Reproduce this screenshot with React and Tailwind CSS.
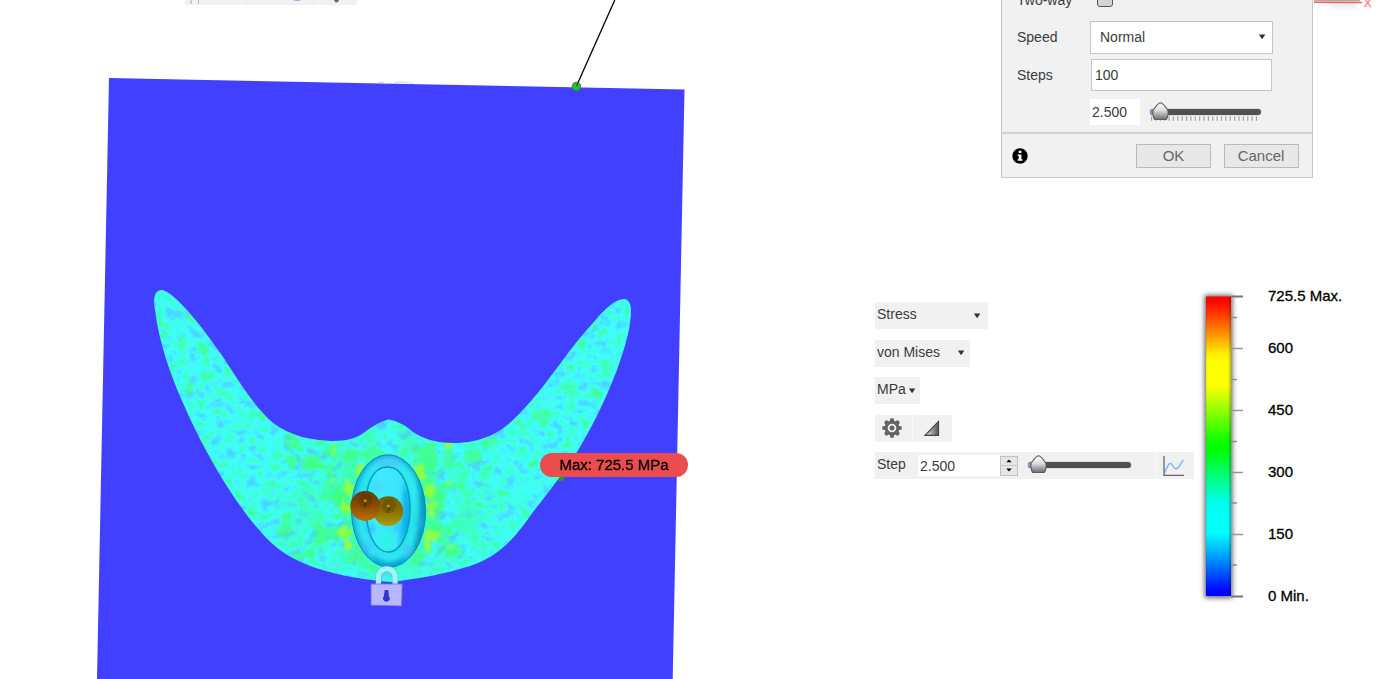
import React from "react";

const BODY =
  "M161 290C154 291 153 300 155 310C159 342 170 374 183 403C195 431 208 455 223 480C236 501 249 519 260 531" +
  "C276 550 293 560 316 568C340 576 366 580 391 582C417 579 445 574 470 566C501 556 517 535 533 512" +
  "C549 492 564 472 577 452C596 421 608 393 617 370C625 347 631 329 631 310C631 303 628 299 624 299" +
  "C613 300 603 311 593 323C582 335 572 347 563 360C545 384 531 403 513 420C498 434 480 443 452 443" +
  "C436 443 424 439 413 432C405 425 397 421 389 419.500C381 421 373 426 365 432C357 438 348 441 332 441" +
  "C312 440 292 437 273 423C256 408 241 385 227 363C214 343 200 325 187 310C176 298 167 290 161 290Z";

const YELLOW = [
  [360, 470, 5, 6], [349, 487, 6, 7], [344, 505, 6, 7], [343, 532, 7, 6], [347, 544, 4, 6], [419, 471, 6, 9],
  [429, 490, 6, 8], [430, 507, 5, 8], [431, 534, 8, 5], [427, 543, 4, 7], [332, 447, 2, 6], [448, 445, 3, 3],
  [331, 479, 3, 1.5], [447, 481, 3, 2], [324, 542, 2, 3], [450, 545, 2, 3],
];

const GREEN = [
  [291, 440, 8, 8], [291, 461, 6, 7], [332, 450, 6, 8], [349, 454, 10, 7], [330, 474, 5, 12], [372, 456, 10, 8],
  [428, 455, 10, 12], [448, 455, 5, 12], [414, 448, 8, 6], [488, 442, 7, 6], [452, 484, 12, 5], [340, 495, 8, 14],
  [438, 500, 7, 14], [330, 530, 16, 6], [440, 530, 16, 6], [356, 551, 9, 12], [416, 550, 9, 14], [320, 540, 7, 7],
  [450, 548, 12, 8], [283, 529, 6, 8], [298, 554, 9, 3], [374, 567, 5, 5], [181, 340, 4, 5], [188, 388, 4, 7],
  [189, 314, 3, 4], [201, 347, 5, 5], [205, 376, 6, 4], [263, 416, 5, 3], [578, 341, 3, 4], [594, 326, 3, 5],
  [567, 386, 8, 4], [597, 395, 5, 4], [538, 415, 8, 5], [517, 422, 4, 5], [162, 334, 3, 4], [500, 550, 6, 3],
  [310, 461, 9, 7], [472, 455, 9, 7],
];

function Lock() {
  return (
    <g>
      <path d="M378.500 586V577a8.300 8.300 0 0 1 16.600 0v9" fill="none" stroke="#7d96df" strokeOpacity=".35" strokeWidth="7" />
      <path d="M378.500 586V577a8.300 8.300 0 0 1 16.600 0v9" fill="none" stroke="#9df6fa" strokeWidth="5" />
      <path d="M371 584h31.200l-.6 22-30.600-.8z" fill="#b9b7ff" stroke="#6f6de0" strokeWidth=".8" />
      <path d="M384.700 590h3.600l.6 6.200a3.300 3.300 0 1 1-5 0z" fill="#3732d2" />
    </g>
  );
}

function Ball({ x, y, id }) {
  return (
    <g>
      <circle cx={x} cy={y} r="14.9" fill={`url(#${id})`} />
      <circle cx={x + 0.5} cy={y - 5} r="7" fill="#2f2000" opacity=".2" />
      <path d={`M${x - 1.5} ${y + 2}l1.500-10 2 6z`} fill="#1f1600" opacity=".35" />
      <circle cx={x} cy={y - 5.3} r="1.500" fill="#e09a08" opacity=".85" />
    </g>
  );
}

function Model() {
  return (
    <svg className="block" width="860" height="679" viewBox="0 0 860 679">
      <defs>
        <clipPath id="body"><path d={BODY} /></clipPath>
        <filter id="mesh" x="0" y="0" width="1" height="1" colorInterpolationFilters="sRGB">
          <feTurbulence type="fractalNoise" baseFrequency=".085 .1" numOctaves="4" seed="7" />
          <feColorMatrix values="1 0 0 0 0 1 0 0 0 0 1 0 0 0 0 0 0 0 0 1" />
          <feComponentTransfer>
            <feFuncR type="table" tableValues=".28 .28 .28 .28 .27 .25 .25 .25 .25 .25 .25" />
            <feFuncG type="table" tableValues=".8 .82 .84 .88 .95 1 1 1 1 1 1" />
            <feFuncB type="table" tableValues="1 1 1 1 1 .97 .88 .76 .6 .5 .4" />
          </feComponentTransfer>
          <feGaussianBlur stdDeviation=".6" />
        </filter>
        <filter id="patches" x="0" y="0" width="1" height="1" colorInterpolationFilters="sRGB">
          <feTurbulence type="fractalNoise" baseFrequency=".05 .045" numOctaves="4" seed="21" />
          <feColorMatrix values="0 0 0 0 .25 0 0 0 0 1 0 0 0 0 .5 0 3.500 0 0 -1.300" />
        </filter>
        <filter id="ragged" x="-.1" y="-.1" width="1.2" height="1.2">
          <feTurbulence type="fractalNoise" baseFrequency=".14" numOctaves="2" seed="4" result="n" />
          <feDisplacementMap in="SourceGraphic" in2="n" scale="11" xChannelSelector="R" yChannelSelector="G" />
          <feGaussianBlur stdDeviation=".9" />
        </filter>
        <filter id="soft"><feGaussianBlur stdDeviation="2" /></filter>
        <radialGradient id="near" gradientUnits="userSpaceOnUse" cx="0" cy="0" r="1" gradientTransform="translate(389 505) scale(130 95)">
          <stop offset=".35" stopColor="#fff" />
          <stop offset=".65" stopColor="#888" />
          <stop offset="1" stopColor="#000" />
        </radialGradient>
        <mask id="nearMask"><rect x="150" y="280" width="490" height="310" fill="url(#near)" /></mask>
        <linearGradient id="ring" x1="0" x2="1" y1="0" y2=".15">
          <stop offset="0" stopColor="#10a5cf" />
          <stop offset=".12" stopColor="#1cd4ec" />
          <stop offset=".5" stopColor="#34dcf8" />
          <stop offset=".88" stopColor="#22e5e8" />
          <stop offset="1" stopColor="#089dc0" />
        </linearGradient>
        <linearGradient id="core" x1="0" x2="1" y1=".3" y2=".5">
          <stop offset="0" stopColor="#25e7ee" />
          <stop offset=".3" stopColor="#41e9ff" />
          <stop offset=".75" stopColor="#38e4fa" />
          <stop offset="1" stopColor="#10b4e6" />
        </linearGradient>
        <linearGradient id="copper" x1="0" x2="0" y1="0" y2="1">
          <stop offset="0" stopColor="#653800" />
          <stop offset=".5" stopColor="#8b4e00" />
          <stop offset="1" stopColor="#bb7000" />
        </linearGradient>
        <linearGradient id="brass" x1="0" x2="0" y1="0" y2="1">
          <stop offset="0" stopColor="#6e6000" />
          <stop offset=".5" stopColor="#897000" />
          <stop offset="1" stopColor="#ac9d13" />
        </linearGradient>
        <clipPath id="hole"><ellipse cx="388.5" cy="511" rx="37.3" ry="56.5" /></clipPath>
      </defs>

      <path d="M109 78L684.500 89.500 672.700 679H97z" fill="#4240ff" />
      <path d="M378 83l4-1 4 2M395 82.500q6-1.500 13 0l5 1" fill="none" stroke="#c9c9d4" strokeWidth=".8" />
      <path d="M614.800 0L576.500 86" stroke="#000" strokeWidth="1.3" />
      <circle cx="576.4" cy="86.4" r="4.3" fill="#2fb52f" stroke="#2b8452" strokeWidth=".8" />
      <path d="M576.500 86l1.600-3.500" stroke="#0a4d0a" />
      <circle cx="560.5" cy="477" r="4.3" fill="#1b9c35" />

      <g clipPath="url(#body)">
        <rect x="150" y="285" width="485" height="300" filter="url(#mesh)" />
        <g mask="url(#nearMask)" opacity=".7">
          <rect x="250" y="410" width="280" height="175" filter="url(#patches)" />
        </g>
        <g filter="url(#ragged)">
          {GREEN.map(([x, y, a, b]) => (
            <ellipse key={`${x}-${y}`} cx={x + 1} cy={y + 1} rx={a} ry={b} fill="#44ff62" opacity=".5" />
          ))}
          {YELLOW.map(([x, y, a, b]) => (
            <ellipse key={`${x}-${y}`} cx={x + 1} cy={y + 1} rx={a} ry={b} fill="#96ff38" opacity=".9" />
          ))}
        </g>
        <path d="M318 543l27 16 16-22M457 540l-27 22-14-20M429 562v18M345 559l4 16" fill="none" stroke="#40f6ee" strokeOpacity=".55" strokeWidth="2" />
      </g>

      <g transform="rotate(-1 388 511)">
        <ellipse cx="388.5" cy="511" rx="37.3" ry="56.5" fill="url(#ring)" />
        <g clipPath="url(#hole)">
          <g filter="url(#soft)">
            <ellipse cx="388.5" cy="511" rx="36.8" ry="56" fill="none" stroke="#0a9cc8" strokeWidth="3.5" />
            <ellipse cx="388" cy="511" rx="28" ry="48" fill="none" stroke="#38ecf2" strokeWidth="6" opacity=".65" />
            <path d="M377 459q12-5 25 0l-4 10q-9-3-17 0z" fill="#4bc6ff" opacity=".75" />
            <circle cx="366" cy="547" r="5" fill="#47bdff" opacity=".7" />
            <circle cx="407" cy="550" r="5" fill="#47bdff" opacity=".7" />
            <circle cx="419" cy="525" r="4" fill="#26b4f6" opacity=".6" />
            <path d="M372 553q16 17 34 0l-6 14h-24z" fill="#0094cf" opacity=".7" />
          </g>
        </g>
        <ellipse cx="388.5" cy="511" rx="37" ry="56.2" fill="none" stroke="#0790b5" strokeWidth=".9" />
        <path d="M388 467C404 467 410 488 410 508S402 552 388 552 366 532 366 508 373 467 388 467z" fill="url(#core)" stroke="#069eb5" strokeWidth="1.5" />
        <g filter="url(#soft)">
          <path d="M406 485q5 20 1 43l-6 12q4-28 3-45z" fill="#0799e6" opacity=".6" />
          <circle cx="379" cy="486" r="4" fill="#52c7ff" opacity=".7" />
          <circle cx="371" cy="529" r="3.5" fill="#2dafff" opacity=".75" />
          <circle cx="397" cy="528" r="4" fill="#33c0ff" opacity=".7" />
          <ellipse cx="386" cy="540" rx="8" ry="9" fill="#2bfbdc" opacity=".7" />
        </g>
      </g>

      <Ball x={388.3} y={511.2} id="brass" />
      <Ball x={365.2} y={506} id="copper" />
      <Lock />
    </svg>
  );
}

function Caret() {
  return (
    <svg className="block shrink-0" width="8" height="6" viewBox="0 0 8 6">
      <path d="M.9.600h6.400L4.100 5.300z" fill="#333" />
    </svg>
  );
}

function Slider({ width, ticks }) {
  const marks = Array.from({ length: 25 }, (_, i) => 2 + i * 4.37);
  return (
    <svg className="block shrink-0" width={width + 4} height="22" viewBox={`0 0 ${width + 4} 22`}>
      <defs>
        <linearGradient id="thumb" x1="0" x2="0" y1="0" y2="1">
          <stop offset="0" stopColor="#fff" />
          <stop offset=".45" stopColor="#dedede" />
          <stop offset="1" stopColor="#6c6c6c" />
        </linearGradient>
      </defs>
      <rect x="0" y="7" width={width + 2} height="8" rx="4" fill="#dedede" />
      {ticks && marks.map((x) => <rect key={x} x={x} y="15.4" width="1.2" height="4.3" fill="#a0a0a0" />)}
      <rect x="1" y="8" width={width} height="6" rx="3" fill="#505050" />
      <path d="M10 8H4a3 3 0 0 0 0 6h6z" fill="#7599dc" />
      <path d="M11.500 1.800c2.800.5 4.900 3.800 7.300 7.200.7 3.500.1 7-1.500 9.500H5.700c-1.600-2.500-2.200-6-1.500-9.500 2.400-3.400 4.500-6.700 7.300-7.200z" fill="url(#thumb)" stroke="#5c5c5c" strokeWidth="1.1" />
    </svg>
  );
}

function Gear() {
  return (
    <svg className="block" width="20" height="20" viewBox="0 0 20 20">
      <g fill="#646464">
        {[0, 45, 90, 135, 180, 225, 270, 315].map((a) => (
          <path key={a} d="M7.900 4.500L8.200.600q1.800-.7 3.600 0L12.100 4.500z" transform={`rotate(${a} 10 10)`} />
        ))}
      </g>
      <circle cx="10" cy="10" r="5.9" fill="none" stroke="#646464" strokeWidth="3.2" />
      <circle cx="10" cy="10" r="2.5" fill="#646464" />
    </svg>
  );
}

function Wedge() {
  return (
    <svg className="block" width="17" height="17" viewBox="0 0 17 17">
      <defs>
        <linearGradient id="wedge" x1="0" x2="1" y1="0" y2="0">
          <stop offset="0" stopColor="#eee" />
          <stop offset="1" stopColor="#555" />
        </linearGradient>
      </defs>
      <path d="M2 15.300L15.500 1.500v13.800z" fill="url(#wedge)" stroke="#444" strokeWidth="1.2" />
    </svg>
  );
}

function ChartIcon() {
  return (
    <svg className="block" width="22" height="22" viewBox="0 0 22 22">
      <path d="M1.500 18C3 16 4.500 9 7 8.500c3-.5 3 5.500 6 5.200C16.500 13.400 17 8 20.500 5" fill="none" stroke="#83b4fb" strokeWidth="1.5" />
      <path d="M1 1v19.300h20" fill="none" stroke="#666" strokeWidth="1.3" />
    </svg>
  );
}

function Field({ label, className = "", children }) {
  return (
    <div className={`flex items-center ${className}`}>
      <span className="w-[73px] shrink-0">{label}</span>
      {children}
    </div>
  );
}

function Dialog() {
  return (
    <div className="h-[178px] w-[312px] overflow-hidden border border-t-0 border-[#c6c6c6] bg-[#f1f1f1] text-sm text-[#3b3b3b]">
      <div className="flex h-[134px] flex-col border-b-2 border-[#d2d2d2] pl-[15px]">
        <Field label="Two-way" className="-mt-[11px] h-[21px]">
          <span className="-mt-px ml-[7px] h-4 w-4 rounded-[3px] border border-[#555] bg-[#d4d4d4]" />
        </Field>
        <Field label="Speed" className="mt-[10px] h-[33px]">
          <div className="mt-px flex h-[33px] w-[183px] items-center justify-between border border-[#c5c5c5] bg-white pr-[6px] pl-[9px]">
            <span className="-mt-px">Normal</span>
            <Caret />
          </div>
        </Field>
        <Field label="Steps" className="mt-[6px] h-8">
          <div className="ml-px flex h-8 w-[181px] items-center border border-[#c5c5c5] bg-white pl-[3px]">100</div>
        </Field>
        <Field label="" className="mt-2 h-[26px]">
          <div className="flex h-[26px] w-[50px] items-center bg-white pl-[2px]">2.500</div>
          <div className="ml-[9px]"><Slider width={111} ticks /></div>
        </Field>
      </div>
      <div className="flex h-[44px] items-center pl-[10px] text-[15px] text-[#666]">
        <svg className="block" width="16" height="16" viewBox="0 0 16 16">
          <circle cx="8" cy="8" r="7.7" fill="#000" />
          <path d="M6.700 2.700h2.700v2.200H6.700zM5.700 6.500h3.700v4.700h1.100v1.600H5.700v-1.600h1V8h-1z" fill="#fff" />
        </svg>
        <div className="ml-[108px] flex h-6 w-[75px] items-center justify-center border border-[#b9b9b9] bg-[#e8e8e8]">OK</div>
        <div className="ml-[13px] flex h-6 w-[75px] items-center justify-center border border-[#b9b9b9] bg-[#e8e8e8] pr-px">Cancel</div>
      </div>
    </div>
  );
}

function Picker({ children, className }) {
  return (
    <div className={`flex h-[27px] items-center justify-between bg-[#f1f1f1] pl-[2px] ${className}`}>
      <span className="-mt-[3px]">{children}</span>
      <Caret />
    </div>
  );
}

function Controls() {
  return (
    <div className="flex w-[331px] flex-col gap-[10.5px] pt-[18px] text-sm text-[#3b3b3b]">
      <Picker className="w-[113px] pr-[7px]">Stress</Picker>
      <Picker className="w-[95px] pr-[5px]">von Mises</Picker>
      <Picker className="w-[45px] pr-[4px]">MPa</Picker>
      <div className="flex h-[27px] w-[77px] items-center bg-[#f1f1f1]">
        <div className="flex h-full w-[38px] items-center border-r border-[#f6f6f6] pl-[7px]"><Gear /></div>
        <div className="pl-[10px]"><Wedge /></div>
      </div>
      <div className="flex h-[27px] w-[319px] items-center bg-[#f1f1f1] pl-[2px]">
        <span className="-mt-[3px] w-[41px]">Step</span>
        <div className="flex h-[21px] w-[82px] items-center bg-white pl-[2px]">2.500</div>
        <div className="flex h-[20px] w-[18px] flex-col border border-[#c3c3c3] bg-[#e6e6e6]">
          <div className="flex flex-1 items-center justify-center border-b border-[#c8c8c8]">
            <svg className="block" width="6" height="4" viewBox="0 0 6 4"><path d="M3 .4L5.700 3.300H.3z" fill="#000" /></svg>
          </div>
          <div className="flex flex-1 items-center justify-center">
            <svg className="block" width="6" height="4" viewBox="0 0 6 4"><path d="M3 3.600L5.700.6H.3z" fill="#000" /></svg>
          </div>
        </div>
        <div className="-mt-px ml-[9px]"><Slider width={103} /></div>
        <div className="ml-[21px] flex h-full items-center border-l border-[#f8f8f8] pl-[7px]"><ChartIcon /></div>
      </div>
    </div>
  );
}

const LABELS = [
  [11.5, "725.5 Max."], [63.5, "600"], [125.5, "450"], [187.5, "300"], [249.5, "150"], [311.5, "0 Min."],
];

function Legend() {
  return (
    <svg className="mt-px -ml-[12px] block" width="170" height="345" viewBox="-12 0 170 345">
      <defs>
        <linearGradient id="scale" x1="0" x2="0" y1="0" y2="1">
          <stop offset="0" stopColor="#f00" />
          <stop offset=".02" stopColor="#ff0800" />
          <stop offset=".11" stopColor="#ff7c00" />
          <stop offset=".19" stopColor="#ffec00" />
          <stop offset=".22" stopColor="#ff0" />
          <stop offset=".3" stopColor="#fcff00" />
          <stop offset=".48" stopColor="#10ff00" />
          <stop offset=".51" stopColor="#0f0" />
          <stop offset=".69" stopColor="#00fff0" />
          <stop offset=".79" stopColor="#0ff" />
          <stop offset=".87" stopColor="#009cff" />
          <stop offset=".98" stopColor="#0008ff" />
          <stop offset="1" stopColor="#00f" />
        </linearGradient>
        <linearGradient id="edge">
          <stop offset="0" stopColor="#000" stopOpacity=".12" />
          <stop offset=".06" stopColor="#000" stopOpacity="0" />
          <stop offset=".88" stopColor="#000" stopOpacity="0" />
          <stop offset="1" stopColor="#000" stopOpacity=".28" />
        </linearGradient>
        <filter id="glow" x="-.5" y="-.1" width="2" height="1.2"><feGaussianBlur stdDeviation="2.5" /></filter>
      </defs>
      <rect x="-1.5" y="10" width="28" height="303" fill="#000" opacity=".6" filter="url(#glow)" />
      <rect x="0" y="11.5" width="25" height="299.5" fill="url(#scale)" />
      <rect x="0" y="11.5" width="25" height="299.5" fill="url(#edge)" />
      {[32.5, 94.5, 156.5, 218, 280].map((y) => (
        <path key={y} d={`M25 ${y}h6`} stroke="#8d8d8d" strokeWidth="1.5" />
      ))}
      {LABELS.map(([y, t], i) => (
        <g key={t}>
          <path d={`M25 ${y}h12`} stroke={i % 5 ? "#999" : "#777"} strokeWidth={i % 5 ? 1.5 : 2} />
          <text x="62" y={y + 4.5} fontSize="15" fill="#000" stroke="#000" strokeWidth=".3">{t}</text>
        </g>
      ))}
    </svg>
  );
}

export default function App() {
  return (
    <div className="flex h-[679px] w-[1396px] overflow-hidden bg-white font-['Liberation_Sans',Arial,sans-serif]">
      <div className="relative w-[860px] shrink-0">
        <Model />
        <div className="absolute top-0 left-[185px] flex h-[5px] w-[172px] overflow-hidden bg-[#f1f1f1]">
          <svg width="172" height="5" viewBox="0 0 172 5">
            <path d="M7 .5L5 2l2 1.500" fill="none" stroke="#aaa" />
            <path d="M13.500 0v4" stroke="#bbb" />
            <path d="M56.500 0v5M133.500 0v5" stroke="#f8f8f8" />
            <path d="M108 0h8q-4 2-8 0z" fill="#78aeee" />
            <path d="M149 0h5q-1 2.500-2.500 2.500T149 0z" fill="#666" />
          </svg>
        </div>
        <div className="absolute top-[453px] left-[540px] flex h-6 w-[148px] items-center justify-center rounded-[12px] bg-[#eb4d4f] text-[15px] whitespace-nowrap text-black [-webkit-text-stroke:0.3px_#000]">
          Max: 725.5 MPa
        </div>
      </div>
      <div className="flex w-[536px] flex-col">
        <div className="flex pl-[141px]">
          <Dialog />
          <svg className="block shrink-0" width="60" height="20" viewBox="0 0 60 20">
            <defs><filter id="shade" x="-.2" y="-1" width="1.4" height="3"><feGaussianBlur stdDeviation="2.5" /></filter></defs>
            <path d="M5 1h40l-3 5h-20z" fill="#000" opacity=".12" filter="url(#shade)" />
            <path d="M1 .7h46" stroke="#999" />
            <path d="M1 2.300l48 .2" stroke="#ff5a5a" strokeWidth="1.4" />
            <text x="51" y="7" fontSize="11" fill="#ff8080" stroke="#ff8080" strokeWidth=".4">X</text>
          </svg>
        </div>
        <div className="mt-[106px] flex pl-[15px]">
          <Controls />
          <Legend />
        </div>
      </div>
    </div>
  );
}
